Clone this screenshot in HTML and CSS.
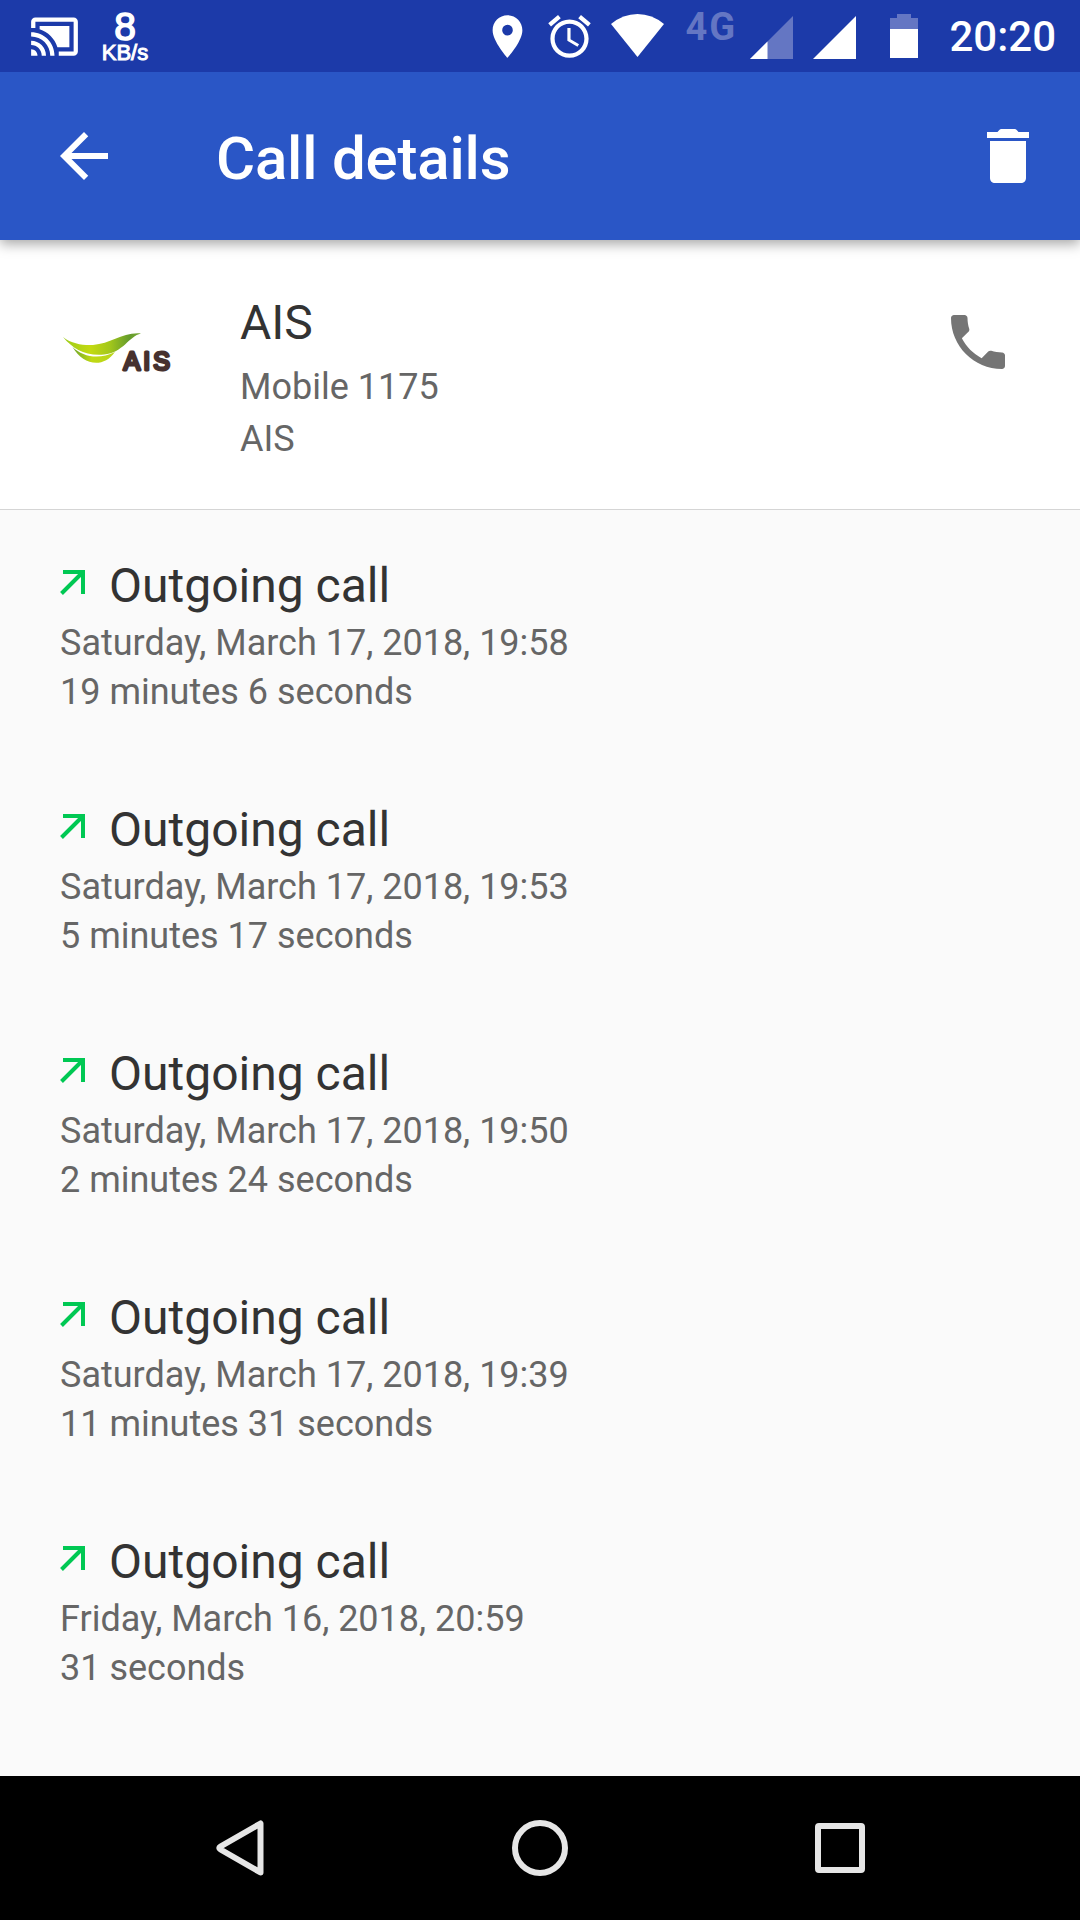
FILE: index.html
```html
<!DOCTYPE html>
<html lang="en">
<head>
    <meta charset="UTF-8">
    <meta name="viewport" content="width=device-width, initial-scale=1.0">
    <title>Call details</title>
    <link rel="stylesheet" href="styles.css">
</head>
<body>

    <div class="status-bar">
        <svg class="cast" width="51" height="51" viewBox="0 0 24 24" fill="#fff"><path d="M1 18v3h3c0-1.66-1.34-3-3-3zm0-4v2c2.76 0 5 2.24 5 5h2c0-3.87-3.13-7-7-7zm18-7H5v1.63c3.96 1.28 7.09 4.41 8.37 8.37H19V7zM1 10v2c4.97 0 9 4.03 9 9h2c0-6.08-4.93-11-11-11zm20-7H3c-1.1 0-2 .9-2 2v3h2V5h18v14h-7v2h7c1.1 0 2-.9 2-2V5c0-1.1-.9-2-2-2z"/></svg>
        <div class="speed">
            <span class="speed-value">8</span>
            <span class="speed-unit">KB/s</span>
        </div>
        <div class="status-right">
            <svg width="51" height="51" viewBox="0 0 24 24" fill="#fff"><path d="M12 2C8.13 2 5 5.13 5 9c0 5.25 7 13 7 13s7-7.75 7-13c0-3.87-3.13-7-7-7zm0 9.500a2.500 2.500 0 1 1 0-5 2.500 2.500 0 0 1 0 5z"/></svg>
            <svg class="alarm" width="51" height="51" viewBox="0 0 24 24" fill="#fff"><path d="M22 5.720l-4.600-3.860-1.290 1.530 4.600 3.860L22 5.720zM7.880 3.390L6.600 1.860 2 5.710l1.290 1.530 4.590-3.850zM12.500 8H11v6l4.750 2.850.75-1.230-4-2.370V8zM12 4c-4.970 0-9 4.030-9 9s4.020 9 9 9c4.970 0 9-4.030 9-9s-4.030-9-9-9zm0 16c-3.870 0-7-3.130-7-7s3.130-7 7-7 7 3.130 7 7-3.130 7-7 7z"/></svg>
            <svg class="wifi" width="53" height="43" viewBox="0 0 53 43" fill="#fff"><path d="M0 10Q12 0 26.500 0T53 10L26.500 43z"/></svg>
            <span class="network">4G</span>
            <svg class="signal" width="43" height="43" viewBox="0 0 43 43"><path d="M43 0v43H0z" fill="#6476c3"/><path d="M17.500 25.500V43H0z" fill="#fff"/></svg>
            <svg class="signal-full" width="43" height="43" viewBox="0 0 43 43"><path d="M43 0v43H0z" fill="#fff"/></svg>
            <svg class="battery" width="28" height="44" viewBox="0 0 28 44"><path d="M7 0h14v4h7v11H0V4h7z" fill="#6476c3"/><path d="M0 15h28v29H0z" fill="#fff"/></svg>
            <span class="clock">20:20</span>
        </div>
    </div>

    <div class="toolbar">
        <svg width="72" height="72" viewBox="0 0 24 24" fill="#fff"><path d="M20 11H7.830l5.590-5.590L12 4l-8 8 8 8 1.410-1.410L7.830 13H20v-2z"/></svg>
        <h1>Call details</h1>
        <svg width="72" height="72" viewBox="0 0 24 24" fill="#fff"><path d="M6 19.300c0 1 .7 1.700 1.700 1.700h8.600c1 0 1.700-.7 1.700-1.700V7H6v12.300zM19 4h-3.500l-.6-.7c-.2-.2-.4-.3-.7-.3H9.800c-.3 0-.5.1-.7.3l-.6.7H5v2h14V4z"/></svg>
    </div>

    <div class="contact">
        <svg class="logo" width="112" height="44" viewBox="0 0 112 44">
            <defs>
                <linearGradient id="leafTop" x1="0" y1="0" x2="1" y2="0">
                    <stop offset="0" stop-color="#9ccb1c"/>
                    <stop offset="0.35" stop-color="#c3da10"/>
                    <stop offset="0.6" stop-color="#a3c71b"/>
                    <stop offset="0.85" stop-color="#659c2c"/>
                    <stop offset="1" stop-color="#77a934"/>
                </linearGradient>
                <linearGradient id="leafBottom" x1="0" y1="0" x2="1" y2="0">
                    <stop offset="0" stop-color="#6ca52b"/>
                    <stop offset="0.45" stop-color="#c0d913"/>
                    <stop offset="1" stop-color="#b9d51a"/>
                </linearGradient>
            </defs>
            <path d="M0 4C9 11 20 12.500 30 12C48 11 59-1 78 0.500C66 3 60 20 41 21.500C22 23 10 16 0 4z" fill="url(#leafTop)"/>
            <path d="M9.500 14C20 24 36 27 52 19C40 36 20 32 9.500 14z" fill="url(#leafBottom)"/>
            <text x="60.500" y="37" class="logo-text" textLength="46.500">AIS</text>
        </svg>
        <div class="contact-info">
            <div class="name">AIS</div>
            <div class="number">Mobile 1175</div>
            <div class="number">AIS</div>
        </div>
        <svg width="72" height="72" viewBox="0 0 24 24" fill="#757575"><path d="M6.620 10.790c1.440 2.830 3.760 5.140 6.590 6.590l2.200-2.200c.27-.27.67-.36 1.020-.24 1.120.37 2.330.57 3.570.57.55 0 1 .45 1 1V20c0 .55-.45 1-1 1-9.390 0-17-7.610-17-17 0-.55.45-1 1-1h3.500c.55 0 1 .45 1 1 0 1.250.2 2.450.57 3.570.11.35.03.74-.25 1.020l-2.200 2.200z"/></svg>
    </div>

    <div class="calls">
        <div class="call">
            <div class="call-type">
                <svg class="arrow" width="26" height="26" viewBox="0 0 26 26"><path d="M3 2H23V24M23 2L1.500 23.500" /></svg>
                Outgoing call
            </div>
            <div class="detail">Saturday, March 17, 2018, 19:58</div>
            <div class="detail">19 minutes 6 seconds</div>
        </div>
        <div class="call">
            <div class="call-type">
                <svg class="arrow" width="26" height="26" viewBox="0 0 26 26"><path d="M3 2H23V24M23 2L1.500 23.500" /></svg>
                Outgoing call
            </div>
            <div class="detail">Saturday, March 17, 2018, 19:53</div>
            <div class="detail">5 minutes 17 seconds</div>
        </div>
        <div class="call">
            <div class="call-type">
                <svg class="arrow" width="26" height="26" viewBox="0 0 26 26"><path d="M3 2H23V24M23 2L1.500 23.500" /></svg>
                Outgoing call
            </div>
            <div class="detail">Saturday, March 17, 2018, 19:50</div>
            <div class="detail">2 minutes 24 seconds</div>
        </div>
        <div class="call">
            <div class="call-type">
                <svg class="arrow" width="26" height="26" viewBox="0 0 26 26"><path d="M3 2H23V24M23 2L1.500 23.500" /></svg>
                Outgoing call
            </div>
            <div class="detail">Saturday, March 17, 2018, 19:39</div>
            <div class="detail">11 minutes 31 seconds</div>
        </div>
        <div class="call">
            <div class="call-type">
                <svg class="arrow" width="26" height="26" viewBox="0 0 26 26"><path d="M3 2H23V24M23 2L1.500 23.500" /></svg>
                Outgoing call
            </div>
            <div class="detail">Friday, March 16, 2018, 20:59</div>
            <div class="detail">31 seconds</div>
        </div>
    </div>

    <div class="nav-bar">
        <svg width="60" height="60" viewBox="0 0 60 60"><path d="M50.500 5.500V54.500L10.500 31.500Q8 30 10.500 28.500z"/></svg>
        <svg width="60" height="60" viewBox="0 0 60 60"><circle cx="30" cy="30" r="25"/></svg>
        <svg width="60" height="60" viewBox="0 0 60 60"><rect x="8" y="8" width="44" height="44" rx="1"/></svg>
    </div>

</body>
</html>
```

FILE: styles.css
```css
* {
    box-sizing: border-box;
}

body {
    margin: 0;
    width: 1080px;
    height: 1920px;
    display: flex;
    flex-direction: column;
    overflow: hidden;
    font-family: Roboto, sans-serif;
    background-color: #fafafa;
}

svg {
    display: block;
    flex-shrink: 0;
}

/* Status bar */
.status-bar {
    position: relative;
    z-index: 2; /* keeps the toolbar shadow off the bar */
    height: 72px;
    flex-shrink: 0;
    display: flex;
    align-items: flex-start;
    padding: 11px 24px 0 29px;
    background-color: #1c3aa9;
    color: #fff;
}

.speed {
    width: 52px;
    margin-left: 19px;
    display: flex;
    flex-direction: column;
    align-items: center;
    font-family: "Liberation Sans", Arial, sans-serif;
}

.speed-value {
    font-size: 39px;
    line-height: 31px;
    -webkit-text-stroke: 1.5px #fff;
}

.speed-unit {
    font-size: 22px;
    line-height: 22px;
    -webkit-text-stroke: 1px #fff;
}

.status-right {
    margin-left: auto;
    display: flex;
    align-items: flex-start;
}

.alarm {
    margin-left: 11px;
}

.wifi {
    margin: 3px 0 0 16px;
}

.network {
    width: 53px;
    margin-left: 21px;
    font-size: 38px;
    line-height: 32px;
    font-weight: bold;
    letter-spacing: 2px;
    color: #6476c3;
}

.signal {
    margin: 5px 0 0 12px;
}

.signal-full {
    margin: 5px 0 0 20px;
}

.battery {
    margin: 3px 0 0 34px;
}

.clock {
    margin-left: 31px;
    font-size: 42px;
    line-height: 52px;
    font-weight: 500;
}

/* Toolbar */
.toolbar {
    position: relative;
    height: 168px;
    flex-shrink: 0;
    display: flex;
    align-items: center;
    padding: 0 36px 0 48px;
    background-color: #2a56c6;
    box-shadow: 0 4px 12px rgba(0, 0, 0, 0.35);
}

.toolbar h1 {
    flex: 1;
    margin: 0 0 0 96px;
    padding-top: 5px;
    font-size: 60px;
    line-height: 72px;
    font-weight: 500;
    letter-spacing: -0.2px;
    color: #fff;
}

/* Contact */
.contact {
    height: 270px;
    flex-shrink: 0;
    display: flex;
    align-items: flex-start;
    padding: 53px 66px 0 63px;
    background-color: #fff;
    border-bottom: 1px solid #d5d5d5;
}

.contact > svg:last-child {
    margin-top: 13px;
}

.logo {
    margin-top: 40px;
}

.logo-text {
    font-family: "Liberation Sans", Arial, sans-serif;
    font-size: 25px;
    fill: #46312f;
    stroke: #46312f;
    stroke-width: 3;
    stroke-linejoin: round;
}

.contact-info {
    flex: 1;
    margin-left: 65px;
}

.name {
    margin-bottom: 8px;
    font-size: 48px;
    line-height: 60px;
    color: #333;
}

.number {
    font-size: 36px;
    line-height: 52px;
    color: #666;
}

/* Call list */
.calls {
    flex: 1;
    padding: 46px 60px 0;
}

.call {
    margin-bottom: 83px;
}

.call-type {
    display: flex;
    align-items: flex-start;
    margin-bottom: 3px;
    font-size: 48px;
    line-height: 60px;
    color: #333;
}

.arrow {
    margin: 14px 23px 0 0;
    fill: none;
    stroke: #00c853;
    stroke-width: 4;
}

.detail {
    font-size: 36px;
    line-height: 49px;
    color: #666;
}

/* Navigation bar */
.nav-bar {
    height: 144px;
    flex-shrink: 0;
    display: flex;
    justify-content: space-between;
    align-items: center;
    padding: 0 210px;
    background-color: #000;
}

.nav-bar svg {
    fill: none;
    stroke: #e6e6e6;
    stroke-width: 6;
    stroke-linejoin: round;
}
```
